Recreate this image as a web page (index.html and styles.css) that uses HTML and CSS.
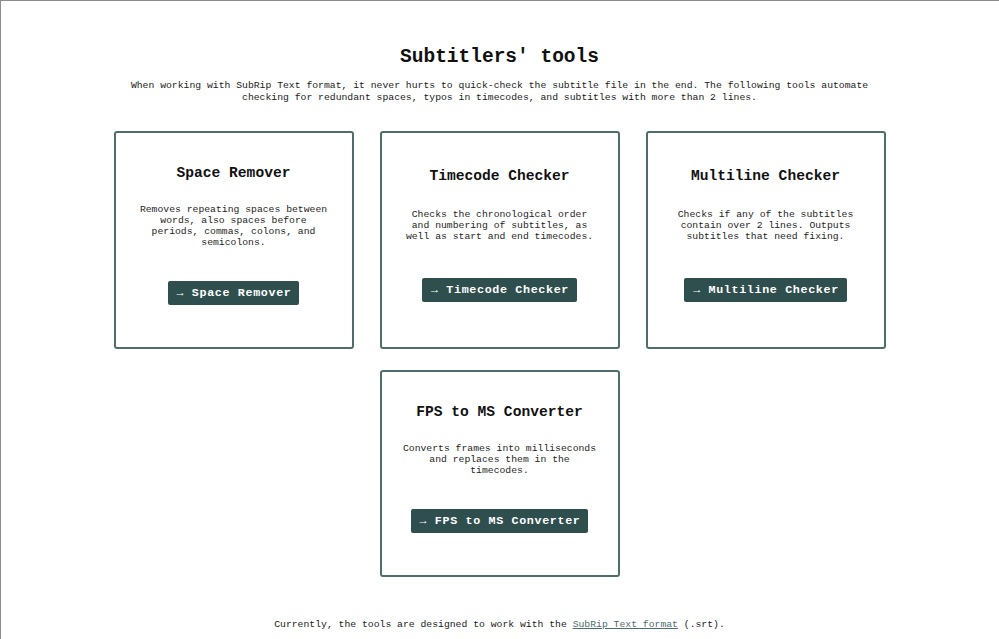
FILE: index.html
```html
<!DOCTYPE html>
<html lang="en">
<head>
<meta charset="utf-8">
<title>Subtitlers' tools</title>
<link rel="stylesheet" href="styles.css">
</head>
<body>
<main class="page">
  <h1 class="page-title">Subtitlers' tools</h1>
  <p class="intro">When working with SubRip Text format, it never hurts to quick-check the subtitle file in the end. The following tools automate checking for redundant spaces, typos in timecodes, and subtitles with more than 2 lines.</p>
  <section class="cards">
    <article class="card">
      <h2 class="card-title">Space Remover</h2>
      <p class="card-desc">Removes repeating spaces between words, also spaces before periods, commas, colons, and semicolons.</p>
      <a class="btn" href="#">→ Space Remover</a>
    </article>
    <article class="card">
      <h2 class="card-title">Timecode Checker</h2>
      <p class="card-desc">Checks the chronological order and numbering of subtitles, as well as start and end timecodes.</p>
      <a class="btn" href="#">→ Timecode Checker</a>
    </article>
    <article class="card">
      <h2 class="card-title">Multiline Checker</h2>
      <p class="card-desc">Checks if any of the subtitles contain over 2 lines. Outputs subtitles that need fixing.</p>
      <a class="btn" href="#">→ Multiline Checker</a>
    </article>
    <article class="card">
      <h2 class="card-title">FPS to MS Converter</h2>
      <p class="card-desc">Converts frames into milliseconds and replaces them in the timecodes.</p>
      <a class="btn" href="#">→ FPS to MS Converter</a>
    </article>
  </section>
  <p class="footer">Currently, the tools are designed to work with the <a class="footer-link" href="#">SubRip Text format</a> (.srt).</p>
</main>
</body>
</html>
```
FILE: styles.css
```css
* { box-sizing: border-box; }
html, body { margin: 0; padding: 0; }
body {
  font-family: "Liberation Mono", "Courier New", monospace;
  color: #1a1a1a;
  background: #fff;
  box-shadow: inset 1px 1px 0 #8c8c8c;
  min-height: 100vh;
}
.page {
  width: 772px;
  margin: 0 auto;
  display: flex;
  flex-direction: column;
  align-items: center;
}
.page-title {
  margin: 46px 0 0;
  font-size: 19.5px;
  line-height: 22px;
  font-weight: bold;
  color: #111;
}
.intro {
  margin: 12px 0 0;
  font-size: 9.75px;
  line-height: 12px;
  text-align: center;
}
.cards {
  margin-top: 27px;
  width: 100%;
  display: flex;
  flex-wrap: wrap;
  justify-content: center;
  gap: 21px 26px;
}
.card {
  width: 240px;
  border: 2px solid #4e6e6e;
  border-radius: 3px;
  padding: 31px 21px 42px;
  display: flex;
  flex-direction: column;
  align-items: center;
  justify-content: space-evenly;
  text-align: center;
}
.card-title {
  margin: 0 0 21.5px;
  font-size: 14.6px;
  line-height: 18px;
  font-weight: bold;
  color: #111;
}
.card-desc {
  margin: 0 0 33.5px;
  font-size: 9.75px;
  line-height: 11px;
  color: #1e1e1e;
}
.btn {
  display: inline-block;
  height: 24px;
  line-height: 24px;
  padding: 0 8px 0 9px;
  background: #2f4f4f;
  color: #fff;
  font-weight: bold;
  font-size: 11.7px;
  letter-spacing: 0.65px;
  text-decoration: none;
  border-radius: 2px;
  white-space: nowrap;
}
.footer {
  margin: 42px 0 0;
  font-size: 9.75px;
  line-height: 12px;
  text-align: center;
}
.footer-link {
  color: #4a6d6d;
  text-decoration: underline;
}
```
